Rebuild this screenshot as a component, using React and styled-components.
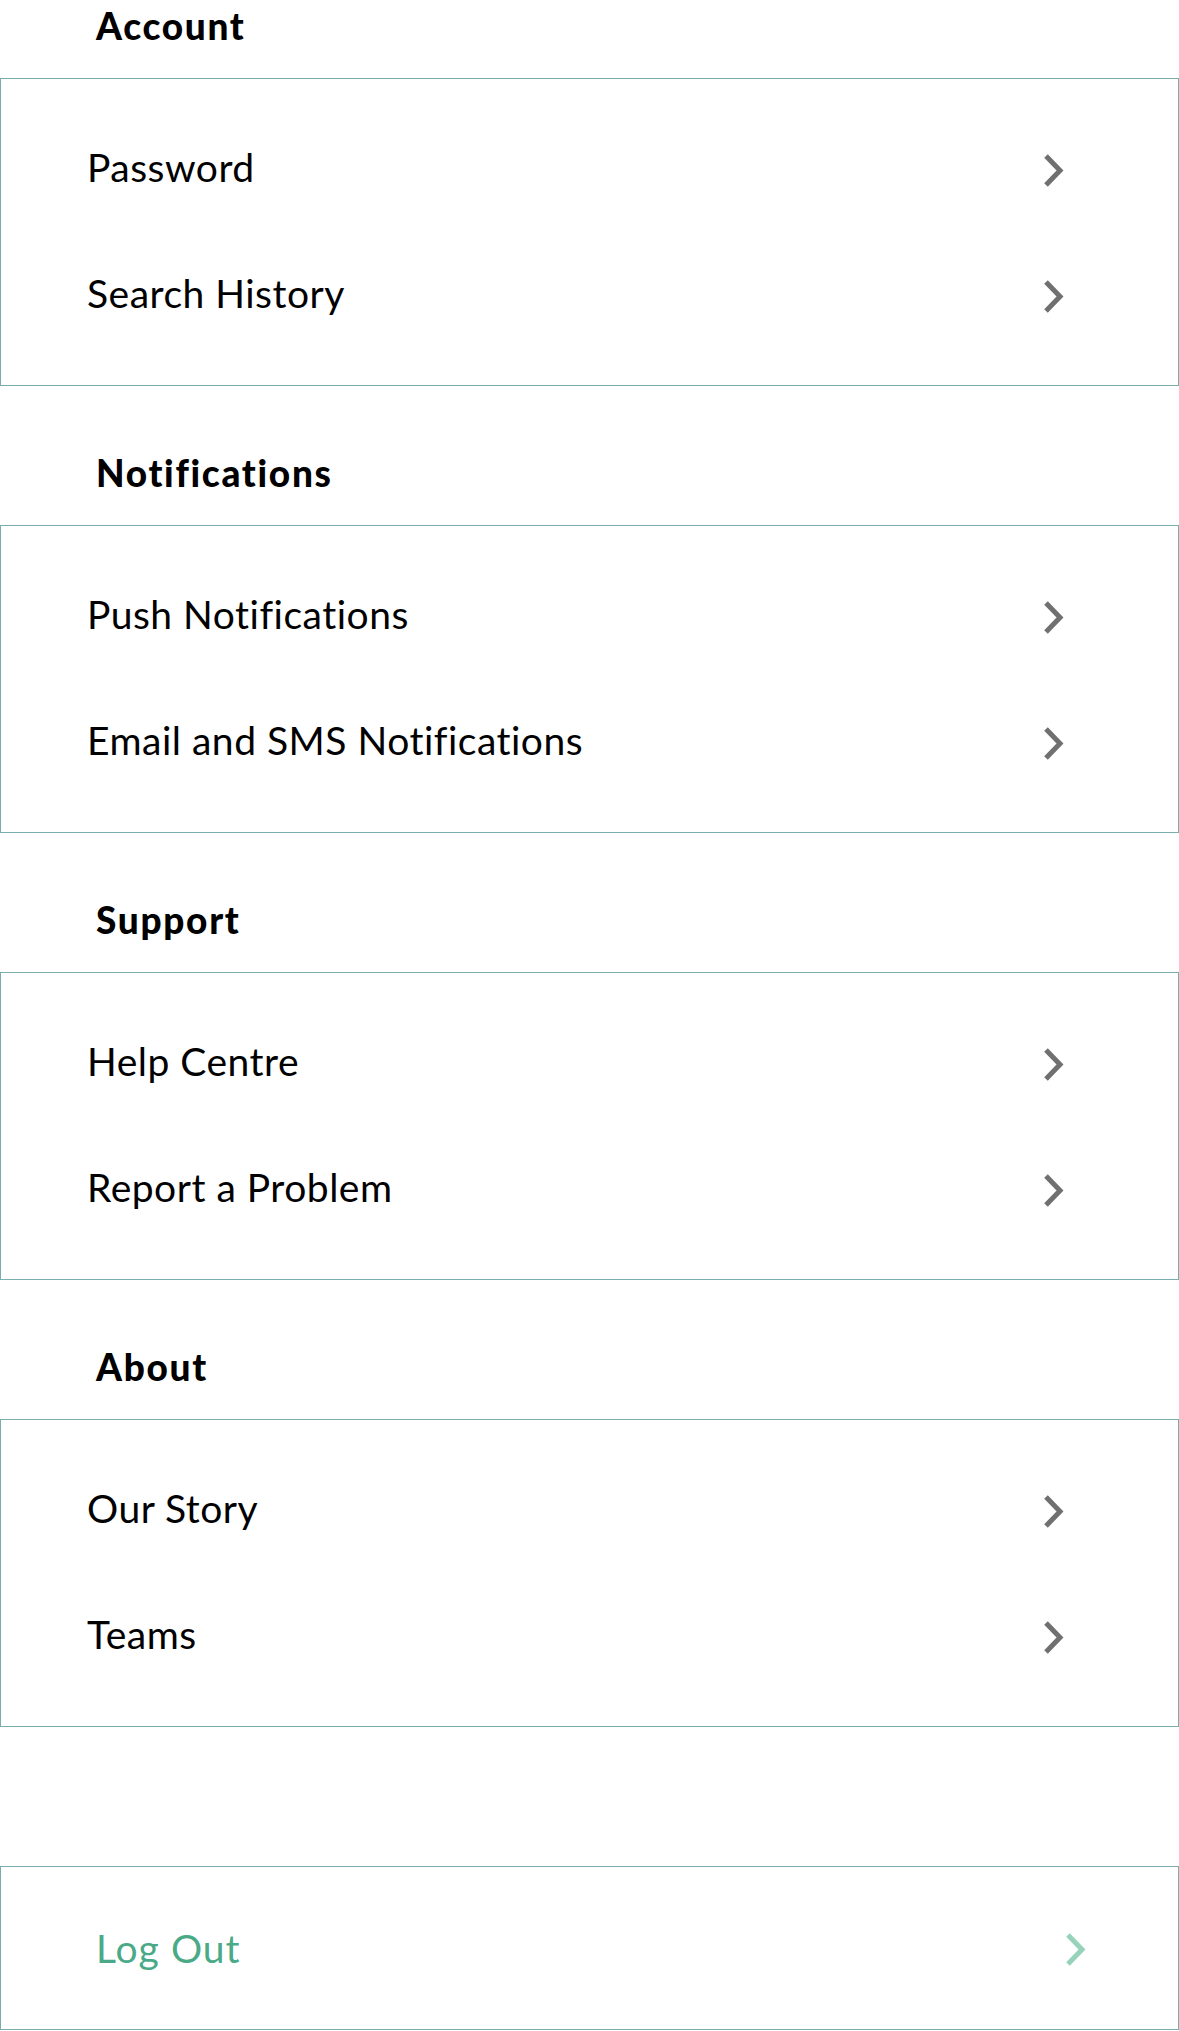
import styled, { createGlobalStyle } from "styled-components"

const GlobalStyle = createGlobalStyle`
    html, body {
        margin: 0;
        padding: 0;
        background: #FFF;
    }
    body {
        font-family: 'Lato', 'Noto Sans', sans-serif;
        color: #000;
    }
`

const Page = styled.div`
    display: flex;
    flex-direction: column;
    width: 100%;
`

const Section = styled.section`
    display: flex;
    flex-direction: column;
    & + & {
        margin-top: 61px;
    }
`

const Titulo = styled.h2`
    box-sizing: border-box;
    height: 78px;
    margin: 0;
    padding: 4px 0 0 96px;
    font-size: 37px;
    line-height: 1.2;
    font-weight: 900;
    letter-spacing: 1.7px;
    color: #000;
`

const Card = styled.div`
    border: 1px solid #7aaeae;
    padding: ${({ $solo }) => ($solo ? "0" : "25px 0 29px")};
    display: flex;
    flex-direction: column;
`

const Linha = styled.div`
    display: flex;
    align-items: center;
    justify-content: space-between;
    height: ${({ $solo }) => ($solo ? "162px" : "126px")};
    padding: ${({ $solo }) => ($solo ? "0 92px 0 95px" : "0 114px 0 86px")};
`

const Rotulo = styled.span`
    font-size: 39px;
    line-height: 1.2;
    font-weight: 400;
    letter-spacing: ${({ $verde }) => ($verde ? "1px" : "0.5px")};
    color: ${({ $verde }) => ($verde ? "#4aaa87" : "#000")};
`

const Seta = styled.svg`
    width: 21px;
    height: 35px;
    flex-shrink: 0;
    margin-top: ${({ $solo }) => ($solo ? "2px" : "6px")};
`

function Chevron({ cor, solo }) {
    return (
        <Seta $solo={solo} viewBox="0 0 21 35">
            <polyline
                points="3,3 17,17.5 3,32"
                fill="none"
                stroke={cor}
                strokeWidth="5"
                strokeLinecap="butt"
                strokeLinejoin="miter"
            />
        </Seta>
    )
}

const secoes = [
    { titulo: "Account", itens: ["Password", "Search History"] },
    { titulo: "Notifications", itens: ["Push Notifications", "Email and SMS Notifications"] },
    { titulo: "Support", itens: ["Help Centre", "Report a Problem"] },
    { titulo: "About", itens: ["Our Story", "Teams"] },
]

export default function App() {
    return (
        <Page>
            <GlobalStyle />
            {secoes.map((secao) => (
                <Section key={secao.titulo}>
                    <Titulo>{secao.titulo}</Titulo>
                    <Card>
                        {secao.itens.map((item) => (
                            <Linha key={item}>
                                <Rotulo>{item}</Rotulo>
                                <Chevron cor="#707070" />
                            </Linha>
                        ))}
                    </Card>
                </Section>
            ))}
            <Section>
                <Titulo />
                <Card $solo>
                    <Linha $solo>
                        <Rotulo $verde>Log Out</Rotulo>
                        <Chevron cor="#97d3bb" solo />
                    </Linha>
                </Card>
            </Section>
        </Page>
    )
}
